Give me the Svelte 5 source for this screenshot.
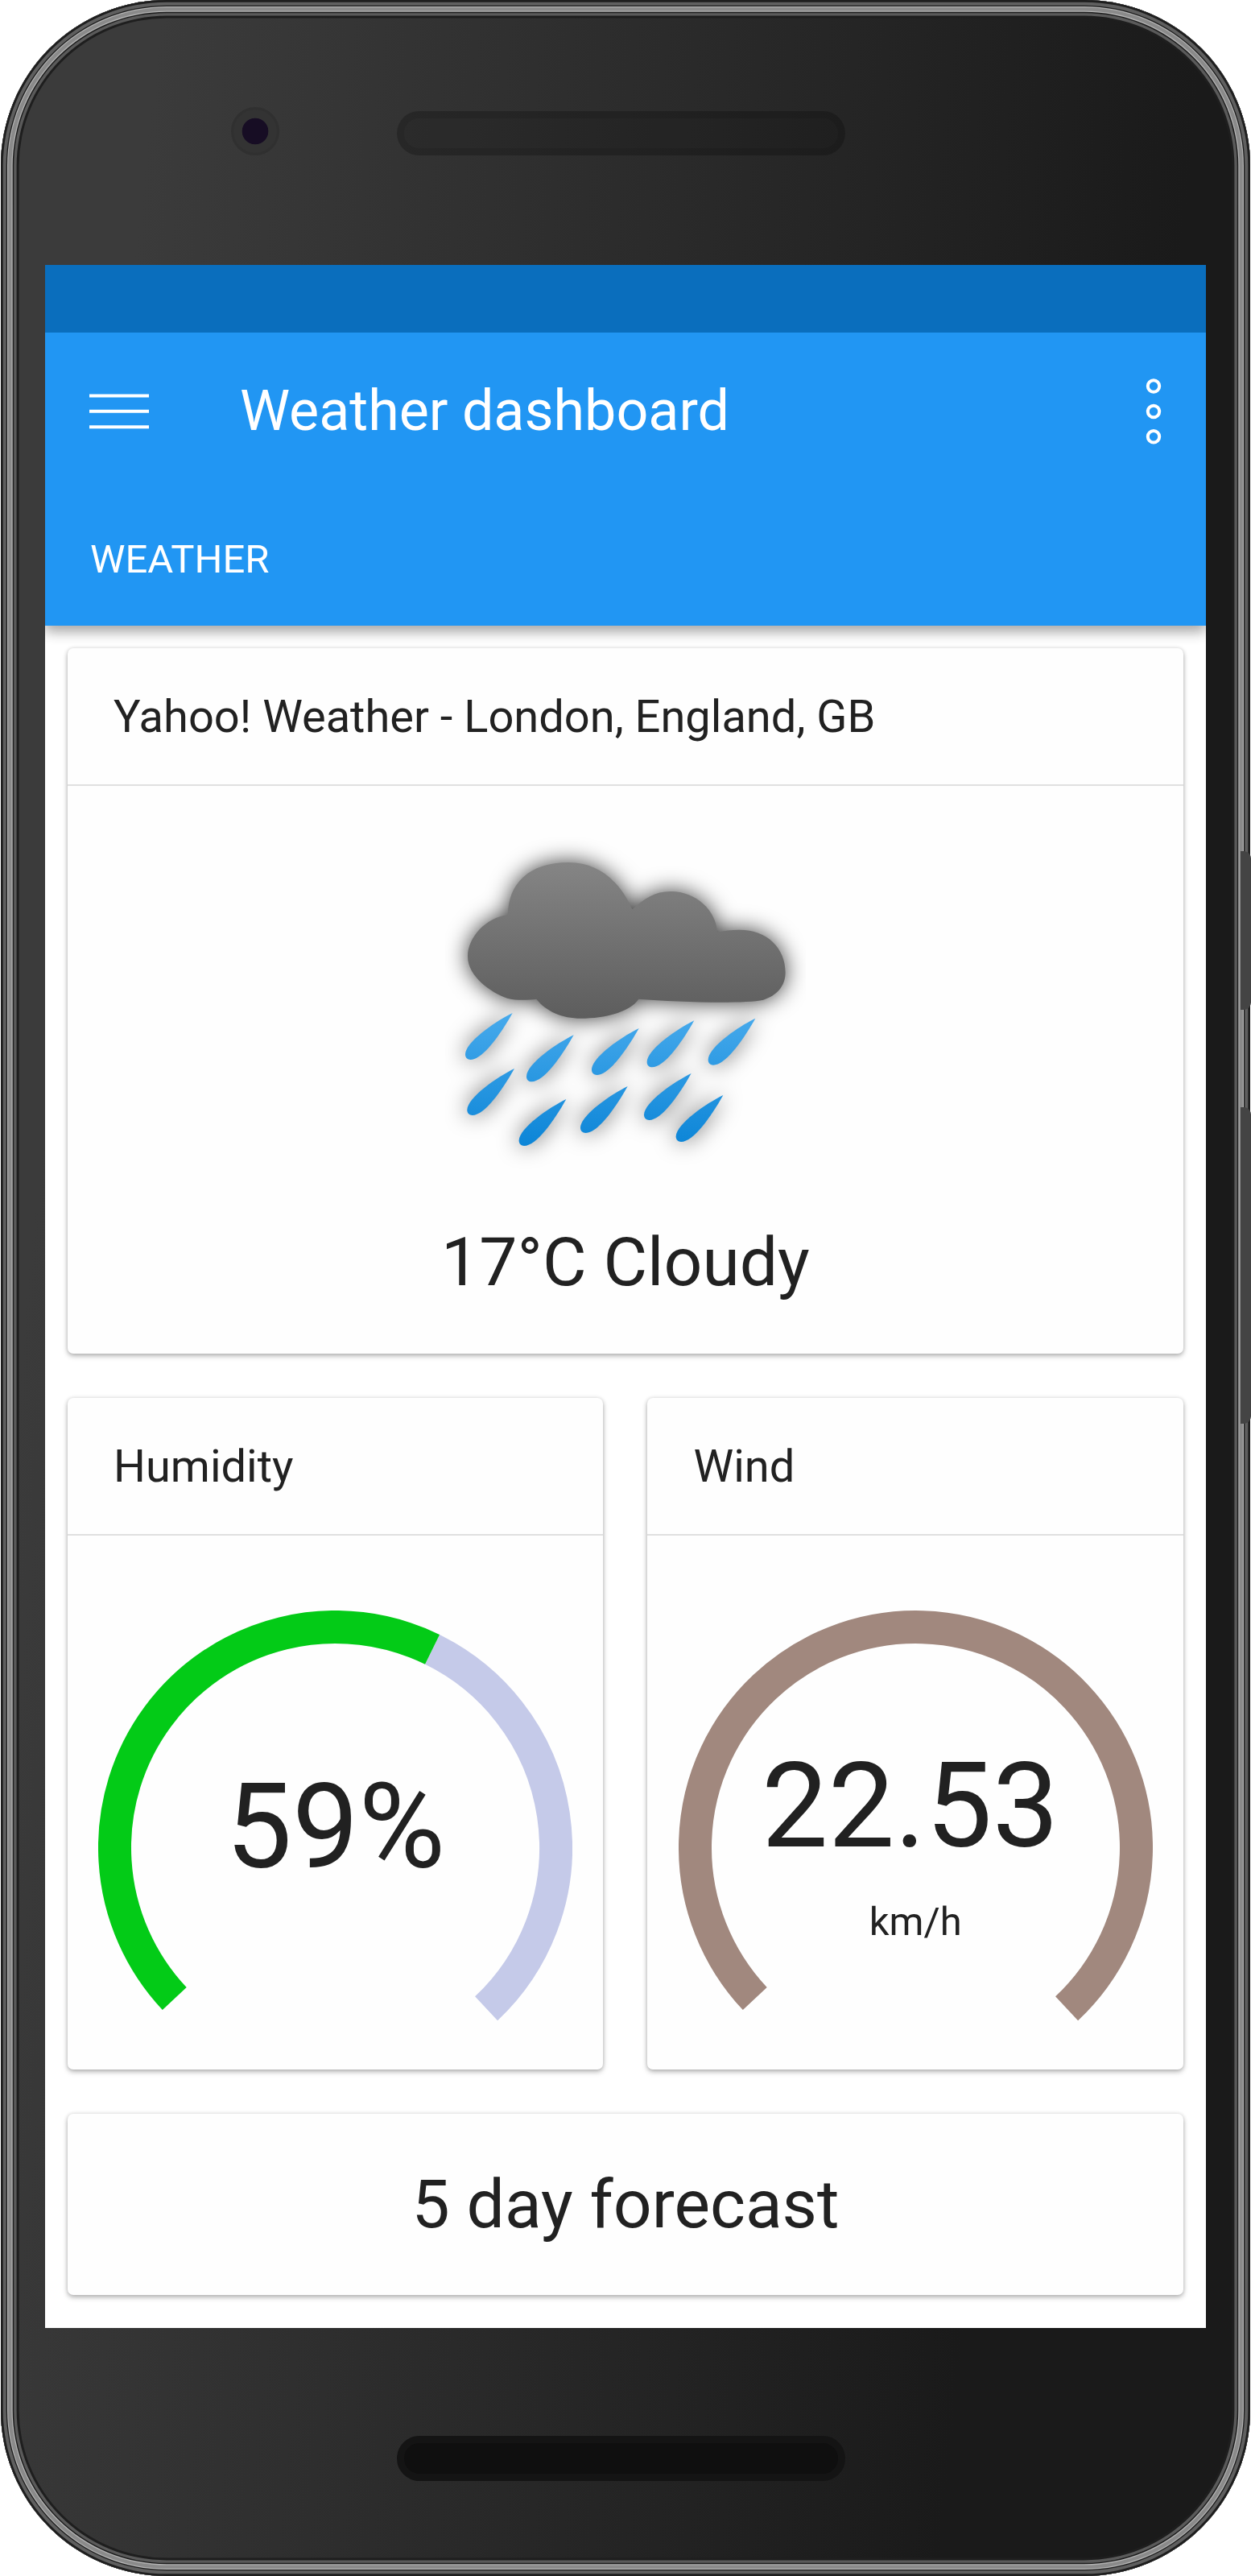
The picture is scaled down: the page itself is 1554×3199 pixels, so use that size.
<script>
  const drops = [
    [290, 711], [518, 793], [761, 768], [967, 739], [1195, 731],
    [297, 918], [490, 1032], [719, 984], [956, 936], [1075, 1017]
  ];
  const dropPath = ([x, y]) =>
    `M${x},${y} c-62,30 -176,108 -176,154 c0,14 9,20 19,20 c46,0 112,-94 157,-174 z`;

  const cloudPath =
    'M273,346 C273,230 350,150 500,150 C610,150 690,220 736,325 C780,285 820,258 880,258 ' +
    'C975,258 1050,330 1053,411 C1080,404 1105,401 1135,401 C1240,401 1307,470 1307,560 ' +
    'C1307,610 1275,645 1225,662 C1150,678 900,670 760,659 C730,705 640,731 545,731 ' +
    'C475,731 415,705 379,659 C345,664 300,664 270,656 C210,635 123,575 123,500 C123,430 190,355 273,346 Z';

  // Gauge ring: 270 degrees, drawn clockwise from the lower left.
  const START = 136.8;
  const R = 274;
  const point = (deg) => {
    const a = (deg * Math.PI) / 180;
    return `${(294.5 + R * Math.cos(a)).toFixed(2)},${(294.5 + R * Math.sin(a)).toFixed(2)}`;
  };
  const arc = (from, to) => {
    const large = (to - from) * 270 > 180 ? 1 : 0;
    return `M${point(START + from * 270)} A${R},${R} 0 ${large} 1 ${point(START + to * 270)}`;
  };

  const gauges = [
    { title: 'Humidity', value: '59%', unit: '', fill: 0.59, color: '#03cb17' },
    { title: 'Wind', value: '22.53', unit: 'km/h', fill: 1, color: '#a1887e' }
  ];
</script>

<div class="phone">
  <div class="bezel-top">
    <div class="camera"></div>
    <div class="speaker"></div>
  </div>

  <div class="screen">
    <div class="status"></div>
    <header>
      <div class="toolbar">
        <svg class="menu" viewBox="0 0 74 44">
          <path d="M0,2.5H74M0,21.8H74M0,41.2H74" />
        </svg>
        <h1>Weather dashboard</h1>
        <svg class="more" viewBox="0 0 20 84">
          <circle cx="10" cy="10.5" r="7.2" />
          <circle cx="10" cy="42" r="7.2" />
          <circle cx="10" cy="73.3" r="7.2" />
        </svg>
      </div>
      <div class="tab">WEATHER</div>
    </header>

    <main>
      <section class="card current">
        <h2>Yahoo! Weather - London, England, GB</h2>
        <svg class="rain" viewBox="39 27 1344 1344">
          <defs>
            <linearGradient id="cloud" gradientUnits="userSpaceOnUse" x1="0" y1="150" x2="0" y2="731">
              <stop offset="0" stop-color="#858585" />
              <stop offset="1" stop-color="#5d5d5d" />
            </linearGradient>
            <linearGradient id="drop" gradientUnits="userSpaceOnUse" x1="0" y1="711" x2="0" y2="1205">
              <stop offset="0" stop-color="#47aaec" />
              <stop offset="1" stop-color="#0c85d7" />
            </linearGradient>
            <filter id="shade" filterUnits="userSpaceOnUse" x="-100" y="-100" width="1640" height="1640">
              <feGaussianBlur stdDeviation="42" />
            </filter>
          </defs>
          <g filter="url(#shade)">
            <path class="cloud-shadow" d={cloudPath} />
            {#each drops as d}
              <path class="drop-shadow" d={dropPath(d)} />
            {/each}
          </g>
          <path fill="url(#cloud)" d={cloudPath} />
          {#each drops as d}
            <path fill="url(#drop)" d={dropPath(d)} />
          {/each}
        </svg>
        <p class="summary">17°C Cloudy</p>
      </section>

      <div class="pair">
        {#each gauges as g}
          <section class="card">
            <h2>{g.title}</h2>
            <div class="gauge">
              <svg viewBox="0 0 589 589">
                {#if g.fill < 1}
                  <path stroke="#c5cae9" d={arc(g.fill, 1)} />
                {/if}
                <path stroke={g.color} d={arc(0, g.fill)} />
              </svg>
              <div class="reading" class:with-unit={g.unit}>
                <span class="value">{g.value}</span>
                {#if g.unit}<span class="unit">{g.unit}</span>{/if}
              </div>
            </div>
          </section>
        {/each}
      </div>

      <section class="card forecast">5 day forecast</section>
    </main>
  </div>

  <div class="bezel-bottom">
    <div class="speaker dark"></div>
  </div>

  <div class="side-button power"></div>
  <div class="side-button volume"></div>
</div>

<style>
  :global(body) {
    background: #fff;
    overflow: hidden;
  }

  .phone {
    position: relative;
    box-sizing: border-box;
    display: flex;
    flex-direction: column;
    width: 1552px;
    height: 3199px;
    margin-left: 0.6px;
    padding-left: 55.4px;
    border-radius: 206px;
    font-family: Roboto, sans-serif;
    color: #212121;
    background: linear-gradient(96deg, #3b3b3b 199px, #1a1a1a 1492px);
    box-shadow:
      inset 0 0 0 2.7px #1e1e1e,
      inset 0 0 0 6.7px #5f5f5f,
      inset 0 0 0 8px #1e1e1e,
      inset 0 0 0 9.2px #b2b2b2,
      inset 0 0 0 13.4px #8a8a8a,
      inset 0 0 0 14.7px #b2b2b2,
      inset 0 0 0 16.2px #1e1e1e,
      inset 0 0 0 19.6px #5a5a5a,
      inset 0 0 0 22.6px #1e1e1e;
  }

  .bezel-top {
    display: flex;
    align-items: flex-start;
    height: 329px;
  }

  .camera {
    box-sizing: border-box;
    width: 60px;
    height: 60px;
    margin: 133.3px 0 0 230.7px;
    border: 3px solid #303030;
    border-radius: 50%;
    background: radial-gradient(circle, #170d24 15.9px, #333 16.7px);
  }

  .speaker {
    box-sizing: border-box;
    width: 557px;
    height: 55.5px;
    margin: 137.6px 0 0 146.3px;
    border: 9.5px solid rgba(0, 0, 0, 0.1);
    border-radius: 28px;
    background: rgba(0, 0, 0, 0.14);
  }

  .screen {
    width: 1442px;
    height: 2562px;
    overflow: hidden;
    background: #fff;
  }

  .status {
    height: 84px;
    background: #0a6ebd;
  }

  header {
    box-sizing: border-box;
    height: 364px;
    color: #fff;
    background: #2196f3;
    box-shadow:
      0 8px 14px rgba(0, 0, 0, 0.28),
      0 2px 22px rgba(0, 0, 0, 0.12);
    clip-path: inset(0 0 -40px 0);
  }

  .toolbar {
    display: flex;
    align-items: center;
    height: 196px;
    padding: 0 55px;
  }

  .menu {
    width: 74px;
    height: 44px;
    fill: none;
    stroke: #fff;
    stroke-width: 4;
  }

  h1 {
    flex: 1;
    margin: 0 0 2px 113px;
    font-size: 70px;
    line-height: 82px;
    font-weight: 400;
  }

  .more {
    width: 20px;
    height: 84px;
    fill: none;
    stroke: #fff;
    stroke-width: 4;
  }

  .tab {
    padding: 57px 56px 0;
    font-size: 49px;
    line-height: 58px;
  }

  main {
    display: flex;
    flex-direction: column;
    gap: 55px;
    padding: 27.5px 28px 0;
  }

  /* Sits above the header so its shadow falls behind the first card. */
  .card {
    position: relative;
    border-radius: 7px;
    background: #fefefe;
    box-shadow:
      0 3px 6px rgba(0, 0, 0, 0.28),
      0 0 5px rgba(0, 0, 0, 0.12);
  }

  h2 {
    box-sizing: border-box;
    height: 171px;
    margin: 0;
    padding: 52px 57px 0;
    border-bottom: 2px solid #e0e0e0;
    font-size: 56px;
    line-height: 66px;
    font-weight: 400;
  }

  .current {
    display: flex;
    flex-direction: column;
    height: 876px;
  }

  .rain {
    align-self: center;
    width: 448px;
    height: 448px;
    margin-top: 54.5px;
  }

  .cloud-shadow {
    fill-opacity: 0.78;
  }

  .drop-shadow {
    fill-opacity: 0.55;
  }

  .summary {
    margin: 41px 0 0;
    font-size: 84px;
    line-height: 98px;
    text-align: center;
  }

  .pair {
    display: grid;
    grid-template-columns: 1fr 1fr;
    gap: 55px;
  }

  .pair .card {
    height: 834px;
  }

  .gauge {
    display: grid;
    justify-content: center;
    padding-top: 93px;
  }

  .gauge svg,
  .reading {
    grid-area: 1 / 1;
    width: 589px;
    height: 589px;
  }

  .gauge path {
    fill: none;
    stroke-width: 41;
  }

  .reading {
    display: flex;
    flex-direction: column;
    align-items: center;
    padding-top: 183px;
    box-sizing: border-box;
  }

  .value {
    font-size: 147px;
    line-height: 172px;
  }

  .reading.with-unit {
    padding-top: 157px;
  }

  .with-unit .value {
    padding-right: 13px;
  }

  .unit {
    margin-top: 29px;
    font-size: 49px;
    line-height: 58px;
  }

  .forecast {
    height: 225px;
    font-size: 84px;
    line-height: 225px;
    text-align: center;
  }

  .bezel-bottom {
    display: flex;
    align-items: flex-start;
  }

  .speaker.dark {
    margin: 134px 0 0 437px;
    border-color: #141414;
    background: #0f0f0f;
  }

  /* Hardware keys that stick out over the frame's right edge. */
  .side-button {
    position: absolute;
    left: 1540.4px;
    width: 13px;
    border-radius: 0 9px 9px 0;
    background: #444;
  }

  .power {
    top: 1057px;
    height: 197px;
  }

  .volume {
    top: 1375px;
    height: 393px;
  }
</style>
